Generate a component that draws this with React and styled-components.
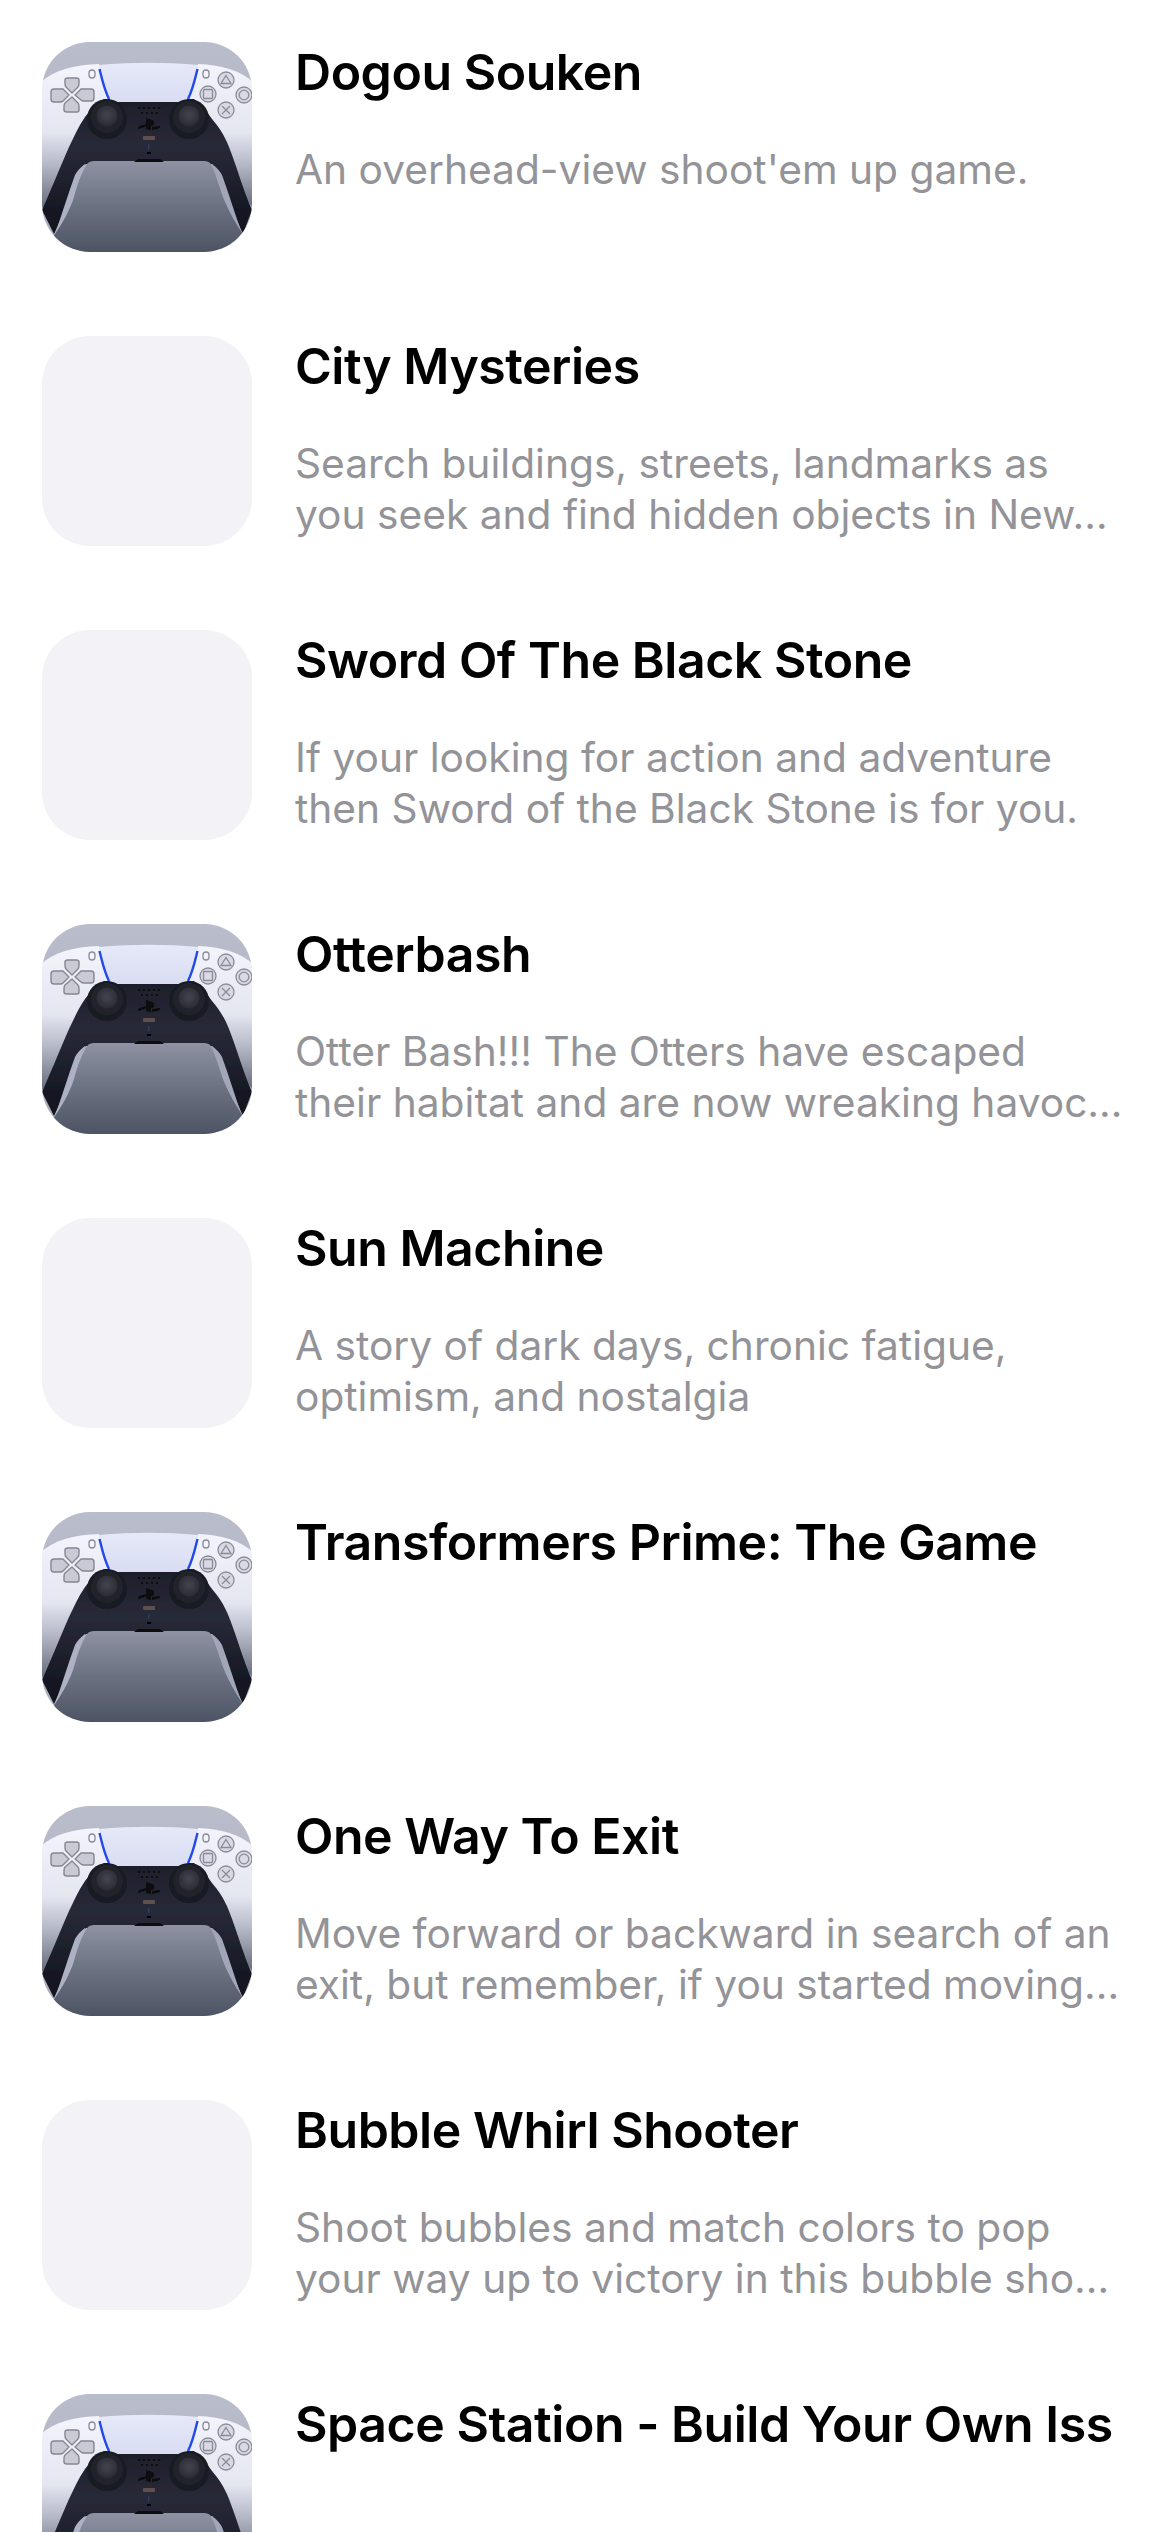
import styled, { createGlobalStyle } from "styled-components";

const GlobalStyle = createGlobalStyle`
  html, body {
    margin: 0;
    height: 2532px;
    overflow: hidden;
    background: #fff;
  }
`;

const List = styled.div`
  display: flex;
  flex-direction: column;
  gap: 84px;
  padding: 42px 42px 0;
`;

const Row = styled.div`
  display: flex;
  gap: 43px;
  height: 210px;
`;

const Thumb = styled.div`
  flex: none;
  width: 210px;
  height: 210px;
  border-radius: 48px;
  overflow: hidden;
  background: #f2f2f7;

  svg {
    display: block;
  }
`;

const Body = styled.div`
  flex: 1;
  min-width: 0;
  font-family: Inter, "Liberation Sans", sans-serif;
`;

const Title = styled.div`
  font-size: 50px;
  line-height: 60px;
  font-weight: 560;
  letter-spacing: -0.47px;
  color: #000;
  white-space: nowrap;
`;

const Desc = styled.div`
  margin-top: 42px;
`;

const DescLine = styled.div`
  font-size: 40.7px;
  line-height: 51px;
  color: #939398;
  white-space: nowrap;
`;

function ControllerArt() {
  return (
    <svg width="210" height="210" viewBox="0 0 210 210">
      <defs>
        <linearGradient id="backdrop" x1="0" y1="0" x2="0" y2="1">
          <stop offset="0" stopColor="#babdcb" />
          <stop offset="1" stopColor="#a8abbb" />
        </linearGradient>
        <linearGradient id="wing" gradientUnits="userSpaceOnUse" x1="0" y1="25" x2="0" y2="170">
          <stop offset="0" stopColor="#f2f3fb" />
          <stop offset="0.45" stopColor="#e4e6f0" />
          <stop offset="0.66" stopColor="#b8bbca" />
          <stop offset="1" stopColor="#5f6575" />
        </linearGradient>
        <linearGradient id="pad" x1="0" y1="0" x2="0" y2="1">
          <stop offset="0" stopColor="#e6e9f8" />
          <stop offset="1" stopColor="#d9ddf2" />
        </linearGradient>
        <linearGradient id="floor" gradientUnits="userSpaceOnUse" x1="0" y1="119" x2="0" y2="210">
          <stop offset="0" stopColor="#8e92a2" />
          <stop offset="0.5" stopColor="#6b7181" />
          <stop offset="1" stopColor="#4d5464" />
        </linearGradient>
        <linearGradient id="shell" gradientUnits="userSpaceOnUse" x1="0" y1="57" x2="0" y2="192">
          <stop offset="0" stopColor="#1d1e2a" />
          <stop offset="0.35" stopColor="#282a38" />
          <stop offset="1" stopColor="#10121c" />
        </linearGradient>
        <radialGradient id="stick" cx="0.5" cy="0.45" r="0.55">
          <stop offset="0" stopColor="#44454f" />
          <stop offset="1" stopColor="#2a2b34" />
        </radialGradient>
        <filter id="soft" x="-5%" y="-5%" width="110%" height="110%">
          <feGaussianBlur stdDeviation="0.45" />
        </filter>
      </defs>
      <g filter="url(#soft)">
        <rect x="-5" y="-5" width="220" height="220" fill="url(#backdrop)" />
        {/* white wings */}
        <path d="M-5 44C8 29 30 23 57 22L68 62L30 130L-5 172Z" fill="url(#wing)" />
        <path d="M215 44C202 29 180 23 156 22L145 62L185 130L215 172Z" fill="url(#wing)" />
        {/* black shell */}
        <path
          d="M62 57C54 62 48 68 43 75C36 85 32 95 27 105C17 128 8 150 0 168L12 192L44 122L170 122L201 192L210 168C201 148 196 128 187 105C182 92 176 84 170 77C164 68 158 62 152 57Z"
          fill="url(#shell)"
        />
        {/* strips along the grips */}
        <path d="M43 122C38 126 35 129 33 133C26 152 20 172 13 192L24 192L46 125Z" fill="#adb1c4" />
        <path d="M170 122C175 126 178 129 180 133C187 152 193 172 200 192L190 192L167 125Z" fill="#a2a6b9" />
        {/* floor */}
        <path
          d="M46 121C47 120 49 119 52 119H162C165 119 167 120 168 121C172 127 176 140 181 155C186 168 194 182 201 192L215 215H-5L13 192C20 182 28 168 32 155C36 140 41 127 46 121Z"
          fill="url(#floor)"
        />
        {/* touchpad */}
        <path
          d="M57 23C90 20 124 20 156 23C152 36 150 48 146 56C145 59 143 60 140 60H73C70 60 68 59 67 56C63 48 61 36 57 23Z"
          fill="url(#pad)"
        />
        <path d="M57.5 27C60 37 62 47 67 57" fill="none" stroke="#2448ea" strokeWidth="2.4" />
        <path d="M155.5 27C153 37 151 47 146 57" fill="none" stroke="#2448ea" strokeWidth="2.4" />
        {/* sticks */}
        <circle cx="65" cy="77" r="20" fill="#191a24" />
        <circle cx="65" cy="75" r="16" fill="#22232c" />
        <circle cx="65" cy="74" r="10.5" fill="url(#stick)" />
        <circle cx="147" cy="77" r="20" fill="#191a24" />
        <circle cx="147" cy="75" r="16" fill="#22232c" />
        <circle cx="147" cy="74" r="10.5" fill="url(#stick)" />
        {/* speaker */}
        <g fill="#07070c">
          <circle cx="97" cy="66" r="1.1" />
          <circle cx="102" cy="66" r="1.1" />
          <circle cx="107" cy="66" r="1.1" />
          <circle cx="112" cy="66" r="1.1" />
          <circle cx="117" cy="66" r="1.1" />
          <circle cx="100" cy="71" r="1.1" />
          <circle cx="105" cy="71" r="1.1" />
          <circle cx="110" cy="71" r="1.1" />
          <circle cx="115" cy="71" r="1.1" />
        </g>
        {/* logo, mute, vent */}
        <path
          d="M104 76L110 78C113 79 113 84 109 84V88L104 87ZM104 84L97 87C95 85 97 84 104 82ZM110 85L118 84C119 86 115 87 110 88Z"
          fill="#07070b"
        />
        <rect x="101" y="94" width="12" height="4" rx="1" fill="#5b5150" />
        <rect x="106" y="102" width="1.5" height="5" fill="#2f3d62" />
        <rect x="105" y="110" width="4" height="2" fill="#050508" />
        <path d="M92 120L96 117H118L122 120Z" fill="#0b0b10" />
        {/* d-pad */}
        <g fill="#c9cad6" stroke="#85868f" strokeWidth="1.4" strokeLinejoin="round">
          <path d="M30 51L24 45C23 44 23 43 23 41V38C23 37 24 36 26 36H34C36 36 37 37 37 38V41C37 43 37 44 36 45Z" />
          <path d="M30 55L23 61C22 62 22 63 22 65V68C22 69 23 70 25 70H35C37 70 37 69 37 68V65C37 63 37 62 36 61Z" />
          <path d="M27 53L21 47C20 47 19 47 18 47H12C10 47 9 48 9 50V57C9 59 10 60 12 60H18C19 60 20 60 21 59Z" />
          <path d="M33 53L39 47C40 47 41 47 42 47H49C51 47 52 48 52 50V56C52 58 51 59 49 59H42C41 59 40 59 39 58Z" />
        </g>
        {/* face buttons */}
        <g fill="none" stroke="#8b8c97" strokeWidth="1.3">
          <circle cx="184" cy="38" r="8" fill="#d8d9e4" />
          <path d="M184 33.5L189 41.5H179Z" />
          <circle cx="166" cy="52" r="8" fill="#d8d9e4" />
          <rect x="161.5" y="47.5" width="9" height="9" rx="1" />
          <circle cx="202" cy="53" r="8" fill="#d8d9e4" />
          <circle cx="202" cy="53" r="4.8" />
          <circle cx="184" cy="68" r="8" fill="#d8d9e4" />
          <path d="M180 64L188 72M188 64L180 72" />
          <rect x="47" y="28" width="6" height="8" rx="3" fill="#f2f3fb" />
          <rect x="161" y="28" width="6" height="8" rx="3" fill="#f2f3fb" />
        </g>
      </g>
    </svg>
  );
}

const games = [
  { title: "Dogou Souken", lines: ["An overhead-view shoot'em up game."], art: true },
  {
    title: "City Mysteries",
    lines: ["Search buildings, streets, landmarks as", "you seek and find hidden objects in New…"],
  },
  {
    title: "Sword Of The Black Stone",
    lines: ["If your looking for action and adventure", "then Sword of the Black Stone is for you."],
  },
  {
    title: "Otterbash",
    lines: ["Otter Bash!!! The Otters have escaped", "their habitat and are now wreaking havoc…"],
    art: true,
  },
  {
    title: "Sun Machine",
    lines: ["A story of dark days, chronic fatigue,", "optimism, and nostalgia"],
  },
  { title: "Transformers Prime: The Game", lines: [], art: true },
  {
    title: "One Way To Exit",
    lines: ["Move forward or backward in search of an", "exit, but remember, if you started moving…"],
    art: true,
  },
  {
    title: "Bubble Whirl Shooter",
    lines: ["Shoot bubbles and match colors to pop", "your way up to victory in this bubble sho…"],
  },
  { title: "Space Station - Build Your Own Iss", lines: [], art: true },
];

export default function App() {
  return (
    <>
      <GlobalStyle />
      <List>
        {games.map((game) => (
          <Row key={game.title}>
            <Thumb>{game.art && <ControllerArt />}</Thumb>
            <Body>
              <Title>{game.title}</Title>
              <Desc>
                {game.lines.map((line) => (
                  <DescLine key={line}>{line}</DescLine>
                ))}
              </Desc>
            </Body>
          </Row>
        ))}
      </List>
    </>
  );
}
